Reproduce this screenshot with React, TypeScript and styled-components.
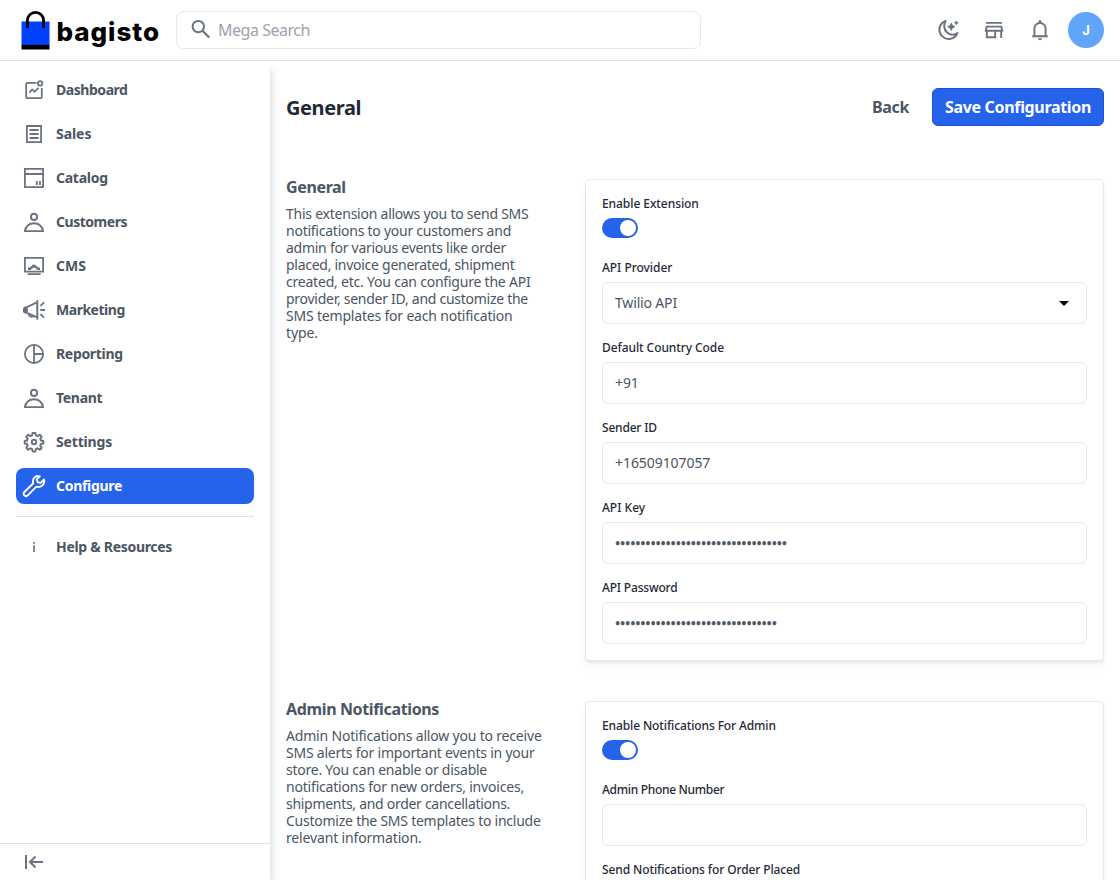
import React from 'react';
import styled, { createGlobalStyle } from 'styled-components';

const GlobalStyle = createGlobalStyle`
  * { box-sizing: border-box; }
  body {
    margin: 0;
    background: #fff;
    color: #4b5563;
    font-family: "Noto Sans", "Open Sans", sans-serif;
    font-size: 14px;
    overflow: hidden;
  }
  p, h1, h2 { margin: 0; }
`;

const Page = styled.div`
  display: flex;
  flex-direction: column;
  height: 880px;
  overflow: hidden;
`;

/* ---------- header ---------- */

const Header = styled.header`
  display: flex;
  align-items: center;
  height: 61px;
  flex: none;
  padding: 0 16px 0 21px;
  border-bottom: 1px solid #e0e3e6;
  background: #fff;
`;

const Brand = styled.div`
  display: flex;
  width: 155px;
  height: 40px;
  padding-top: 1px;
`;

const BrandName = styled.span`
  margin-left: 6.5px;
  font: 800 26px/42px Inter, sans-serif;
  letter-spacing: 0.95px;
  color: #000;
`;

const SearchBox = styled.div`
  display: flex;
  align-items: center;
  width: 525px;
  height: 38px;
  padding-left: 13px;
  gap: 6px;
  border: 1px solid #e5e7eb;
  border-radius: 8px;
`;

const Placeholder = styled.span`
  font-size: 16px;
  line-height: 24px;
  letter-spacing: -0.47px;
  color: #9ca3af;
`;

const HeaderActions = styled.div`
  display: flex;
  align-items: center;
  gap: 22px;
  margin-left: auto;
`;

const Avatar = styled.div`
  display: grid;
  place-items: center;
  width: 36px;
  height: 36px;
  margin-left: -6px;
  border-radius: 50%;
  background: #60a5fa;
  color: #fff;
  font: 700 13px/16px Inter, sans-serif;
`;

/* ---------- sidebar ---------- */

const Body = styled.div`
  display: flex;
  flex: 1;
  min-height: 0;
  overflow: hidden;
`;

const Sidebar = styled.aside`
  display: flex;
  flex-direction: column;
  width: 270px;
  flex: none;
  background: #fff;
  box-shadow: 0 8px 10px rgba(0, 0, 0, 0.18);
`;

const Nav = styled.nav`
  display: flex;
  flex-direction: column;
  gap: 8px;
  padding: 11px 16px 12px;
`;

const NavItem = styled.a<{ $active?: boolean; $track: number }>`
  display: flex;
  align-items: center;
  gap: 10px;
  height: 36px;
  padding-left: 6px;
  border-radius: 8px;
  font-weight: 700;
  letter-spacing: ${(p) => p.$track}px;
  white-space: nowrap;
  background: ${(p) => (p.$active ? '#2563eb' : 'transparent')};
  color: ${(p) => (p.$active ? '#fff' : '#4b5563')};
  svg { color: ${(p) => (p.$active ? '#fff' : '#6b7280')}; }
`;

const NavText = styled.span`
  padding-bottom: 2px;
`;

const HelpArea = styled.div`
  margin: 0 16px;
  padding-top: 12px;
  border-top: 1px solid #dfe3e6;
`;

const Collapse = styled.div`
  display: flex;
  align-items: center;
  height: 37px;
  margin-top: auto;
  padding-left: 22px;
  border-top: 1px solid #e0e3e6;
  color: #6b7280;
`;

/* ---------- content ---------- */

const Main = styled.main`
  flex: 1;
  padding: 27px 16px 0;
`;

const TitleBar = styled.div`
  display: flex;
  align-items: center;
  height: 38px;
`;

const Title = styled.h1`
  flex: 1;
  padding-top: 1px;
  font-size: 20px;
  line-height: 24px;
  font-weight: 700;
  letter-spacing: -0.4px;
  color: #1f2937;
`;

const BackButton = styled.button`
  margin-right: 23px;
  padding: 0;
  border: 0;
  background: none;
  font: 700 16px/24px "Noto Sans", sans-serif;
  letter-spacing: -0.35px;
  color: #4b5563;
`;

const SaveButton = styled.button`
  width: 172px;
  height: 38px;
  padding: 0;
  border: 1px solid #1d4ed8;
  border-radius: 6px;
  background: #2563eb;
  font: 700 16px/24px "Noto Sans", sans-serif;
  letter-spacing: -0.33px;
  color: #fff;
`;

const Sections = styled.div`
  display: flex;
  flex-direction: column;
  gap: 40px;
  margin-top: 53px;
`;

const SectionRow = styled.section`
  display: grid;
  grid-template-columns: 1fr 519px;
`;

const SectionTitle = styled.h2`
  margin-bottom: 7px;
  font-size: 16px;
  line-height: 17px;
  height: 19px;
  font-weight: 700;
  letter-spacing: -0.36px;
`;

const Line = styled.span<{ $track: number }>`
  display: block;
  line-height: 17px;
  letter-spacing: ${(p) => p.$track}px;
  white-space: nowrap;
`;

const Card = styled.div`
  padding: 16px;
  border: 1px solid #e5e7eb;
  border-radius: 4px;
  background: #fff;
  box-shadow: 0 2px 3px rgba(0, 0, 0, 0.07), 0 8px 10px rgba(0, 0, 0, 0.025);
`;

const FieldList = styled.div`
  display: flex;
  flex-direction: column;
`;

const Field = styled.div<{ $gap: number }>`
  margin-bottom: ${(p) => p.$gap}px;
  &:last-child { margin-bottom: 0; }
`;

const Label = styled.div<{ $track: number }>`
  height: 14px;
  margin-bottom: 8px;
  font-size: 12px;
  line-height: 16px;
  font-weight: 500;
  letter-spacing: ${(p) => p.$track}px;
  color: #1f2937;
`;

const Control = styled.div<{ $track?: number }>`
  display: flex;
  align-items: center;
  justify-content: space-between;
  height: 42px;
  padding: 0 17px 0 12px;
  border: 1px solid #e5e7eb;
  border-radius: 6px;
  letter-spacing: ${(p) => p.$track ?? 0}px;
`;

const ControlText = styled.span<{ $secret: boolean }>`
  padding-bottom: ${(p) => (p.$secret ? 0 : 2)}px;
  -webkit-text-stroke: ${(p) => (p.$secret ? '0.5px #4b5563' : '0')};
`;

const Switch = styled.div`
  display: flex;
  justify-content: flex-end;
  width: 36px;
  height: 20px;
  padding: 2px;
  border-radius: 10px;
  background: #2563eb;
  &::after {
    content: "";
    width: 16px;
    height: 16px;
    border-radius: 50%;
    background: #fff;
  }
`;

/* ---------- icons ---------- */

const Icon = ({ children, w = 1.8 }: { children: React.ReactNode; w?: number }) => (
  <svg width="24" height="24" viewBox="0 0 24 24" fill="none" stroke="currentColor" strokeWidth={w}>
    {children}
  </svg>
);

const BagLogo = () => (
  <svg width="29" height="40" viewBox="0 0 29 40">
    <path d="M0.5 10.500h28v23.500h-28z" fill="#0041ff" />
    <path d="M0.5 33.800h28v4.700h-28z" fill="#000" />
    <path d="M6.400 17V9.500a8.100 8.100 0 0 1 16.200 0V17" fill="none" stroke="#000" strokeWidth="2.800" />
  </svg>
);

const person = (
  <Icon w={1.9}>
    <circle cx="12" cy="6.9" r="3.1" />
    <path d="M3 21.100c.4-4.600 4-7.900 9-7.900s8.600 3.300 9 7.900z" />
  </Icon>
);

const icons: Record<string, React.ReactNode> = {
  dashboard: (
    <Icon w={1.8}>
      <path d="M14.500 4.900H5.400a1.200 1.200 0 0 0-1.200 1.200v12.800a1.200 1.200 0 0 0 1.200 1.200h13.200a1.200 1.200 0 0 0 1.200-1.200V10" />
      <path d="M7.400 14.700l2.900-3.200 2.200 2.300 4-4" />
      <circle cx="18.100" cy="5.400" r="2.200" />
    </Icon>
  ),
  sales: (
    <Icon w={1.8}>
      <path d="M4.900 4h14.200v16.200H4.900zM7.500 8h9.200M7.500 12h9.200M7.500 16h9.200" />
    </Icon>
  ),
  catalog: (
    <Icon w={1.8}>
      <path d="M2.900 2.900h18.200v18.200H2.900zM2.900 8h18.200M14.800 15v4M18 15v4" />
    </Icon>
  ),
  customers: person,
  cms: (
    <Icon w={1.8}>
      <path d="M2.900 3.900h18.200v13.800H2.900zM5.600 20.100h13" />
      <path d="M6 16v-2.600h2.300v-1.200h1.800v-1.400h3.800v1.400h1.800v1.200H18V16h-3.200v-1.300h-1.400v-1h-2.800v1H9.200V16z" fill="currentColor" stroke="none" />
    </Icon>
  ),
  marketing: (
    <Icon w={1.8}>
      <path d="M5.500 8.900L15.200 4.200v15.200L5.500 15.200M15.400 2v19.800" />
      <path d="M5.800 8.300H3.300L1 9.900v4.300l2.300 1.600h2.500z" fill="currentColor" stroke="none" />
      <path d="M6.800 15.800c.2 2.200 1.500 3.200 3.900 2.900l1.200-1M18.400 7.900l3.700-3.500M18.200 12h4.800M18.400 16.100l3.700 3.500" />
    </Icon>
  ),
  reporting: (
    <Icon w={1.8}>
      <circle cx="12" cy="12" r="9.100" />
      <path d="M12 2.800v18.400M12 12h9.200" />
    </Icon>
  ),
  tenant: person,
  settings: (
    <Icon w={2}>
      <path strokeLinejoin="round" d="M10.600 2.900h2.800l.5 2.500 1.700.7 2.200-1.400 1.900 1.900-1.400 2.200.7 1.700 2.300.5v2.400l-2.300.5-.7 1.700 1.400 2.200-1.900 1.900-2.200-1.400-1.700.7-.5 2.400h-2.800l-.5-2.400-1.700-.7-2.200 1.400-1.900-1.900 1.400-2.200-.7-1.700-2.300-.5V11l2.300-.5.7-1.700-1.400-2.200 1.900-1.900 2.200 1.400 1.700-.7z" />
      <circle cx="12" cy="12" r="2.200" />
    </Icon>
  ),
  configure: (
    <Icon w={1.9}>
      <path strokeLinejoin="round" d="M17.800 2.300c-2.900-1.100-6.400.8-6.800 4.100-.2 1.100 0 2 .3 2.900L2.400 18c-1 1-1 2.500-.1 3.400s2.400.9 3.400-.1l8.700-8.700c3.600 1.400 7.700-1.200 7.900-5.200 0-.7-.1-1.300-.3-1.900L18.600 8.900l-3-.7-.8-3z" />
    </Icon>
  ),
  help: (
    <Icon w={1.7}>
      <path d="M12 10.300V17M12 7v1.800" />
    </Icon>
  ),
};

/* ---------- data ---------- */

const menu: [string, string, number][] = [
  ['dashboard', 'Dashboard', -0.45],
  ['sales', 'Sales', -0.05],
  ['catalog', 'Catalog', -0.25],
  ['customers', 'Customers', -0.47],
  ['cms', 'CMS', 0.03],
  ['marketing', 'Marketing', -0.48],
  ['reporting', 'Reporting', -0.32],
  ['tenant', 'Tenant', -0.3],
  ['settings', 'Settings', -0.17],
  ['configure', 'Configure', -0.3],
];

type Text = [string, number];
type FieldData = { label: Text; kind?: 'switch' | 'select' | 'password'; value?: Text };

const sections: { title: string; lines: Text[]; fields: FieldData[] }[] = [
  {
    title: 'General',
    lines: [
      ['This extension allows you to send SMS', -0.239],
      ['notifications to your customers and', -0.246],
      ['admin for various events like order', -0.262],
      ['placed, invoice generated, shipment', -0.273],
      ['created, etc. You can configure the API', -0.213],
      ['provider, sender ID, and customize the', -0.269],
      ['SMS templates for each notification', -0.191],
      ['type.', -0.09],
    ],
    fields: [
      { label: ['Enable Extension', -0.07], kind: 'switch' },
      { label: ['API Provider', -0.04], kind: 'select', value: ['Twilio API', -0.162] },
      { label: ['Default Country Code', -0.085], value: ['+91', -0.1] },
      { label: ['Sender ID', -0.2], value: ['+16509107057', -0.07] },
      { label: ['API Key', 0], kind: 'password', value: ['•'.repeat(34), -0.21] },
      { label: ['API Password', -0.182], kind: 'password', value: ['•'.repeat(32), -0.21] },
    ],
  },
  {
    title: 'Admin Notifications',
    lines: [
      ['Admin Notifications allow you to receive', -0.187],
      ['SMS alerts for important events in your', -0.228],
      ['store. You can enable or disable', -0.244],
      ['notifications for new orders, invoices,', -0.191],
      ['shipments, and order cancellations.', -0.291],
      ['Customize the SMS templates to include', -0.242],
      ['relevant information.', -0.155],
    ],
    fields: [
      { label: ['Enable Notifications For Admin', -0.12], kind: 'switch' },
      { label: ['Admin Phone Number', -0.31], value: ['', 0] },
      { label: ['Send Notifications for Order Placed', -0.115], kind: 'switch' },
    ],
  },
];

const FormField = ({ label, kind, value }: FieldData) => (
  <Field $gap={kind === 'switch' ? 22 : 16}>
    <Label $track={label[1]}>{label[0]}</Label>
    {kind === 'switch' ? (
      <Switch />
    ) : (
      <Control $track={value?.[1]}>
        <ControlText $secret={kind === 'password'}>{value?.[0]}</ControlText>
        {kind === 'select' && (
          <svg width="10" height="5" viewBox="0 0 10 5">
            <path d="M0 0h10L5 5z" fill="#000" />
          </svg>
        )}
      </Control>
    )}
  </Field>
);

export default function App() {
  return (
    <Page>
      <GlobalStyle />
      <Header>
        <Brand>
          <BagLogo />
          <BrandName>bagisto</BrandName>
        </Brand>
        <SearchBox>
          <svg width="22" height="22" viewBox="0 0 22 22" fill="none" stroke="#6b7280" strokeWidth="2">
            <circle cx="8.300" cy="7.600" r="5.700" />
            <path d="M12.500 11.800l6.700 6.700" strokeWidth="2.300" />
          </svg>
          <Placeholder>Mega Search</Placeholder>
        </SearchBox>
        <HeaderActions>
          <svg width="24" height="24" viewBox="0 0 24 24" fill="none" stroke="#6b7280" strokeWidth="2">
            <path strokeLinejoin="round" d="M9.600 2.900a9.300 9.300 0 1 0 11.800 12.200c-3.400 2.300-7.600 2-10.300-.5-3.100-3-3.600-7.600-1.500-11.700z" />
            <path d="M15.300 5l1.200 2.500L19 8.700l-2.500 1.200-1.200 2.500-1.200-2.500-2.500-1.200 2.500-1.200zM20.300 2.900l.6 1.300 1.300.6-1.300.6-.6 1.300-.6-1.300-1.300-.6 1.300-.6z" fill="#6b7280" stroke="#6b7280" strokeWidth=".8" />
          </svg>
          <svg width="24" height="24" viewBox="0 0 24 24" fill="none" stroke="#6b7280" strokeWidth="1.900">
            <path d="M4 4.900h16M4.600 8.600h14.800l.8 4.200H3.800zM4.800 12.800v6.400h8.400v-6.400M19.200 12.800v7.300" />
          </svg>
          <svg width="24" height="24" viewBox="0 0 24 24" fill="none" stroke="#6b7280" strokeWidth="1.900">
            <path d="M4.300 18.200h15.400M6.400 18v-7.400a5.600 5.600 0 0 1 11.200 0V18" />
            <path d="M12 2.200v2.500" strokeWidth="2.400" />
            <path d="M10 20.200h4a2 2 0 0 1-4 0z" fill="#6b7280" stroke="none" />
          </svg>
          <Avatar>J</Avatar>
        </HeaderActions>
      </Header>
      <Body>
        <Sidebar>
          <Nav>
            {menu.map(([icon, name, track]) => (
              <NavItem key={icon} $track={track} $active={icon === 'configure'}>
                {icons[icon]}
                <NavText>{name}</NavText>
              </NavItem>
            ))}
          </Nav>
          <HelpArea>
            <NavItem $track={-0.3}>
              {icons.help}
              <NavText>Help &amp; Resources</NavText>
            </NavItem>
          </HelpArea>
          <Collapse>
            <Icon w={2}>
              <path d="M4 5v14M21 12H8M13.500 6.500L8 12l5.500 5.500" />
            </Icon>
          </Collapse>
        </Sidebar>
        <Main>
          <TitleBar>
            <Title>General</Title>
            <BackButton>Back</BackButton>
            <SaveButton>Save Configuration</SaveButton>
          </TitleBar>
          <Sections>
            {sections.map((s) => (
              <SectionRow key={s.title}>
                <div>
                  <SectionTitle>{s.title}</SectionTitle>
                  <p>
                    {s.lines.map(([text, track]) => (
                      <Line key={text} $track={track}>{text}</Line>
                    ))}
                  </p>
                </div>
                <Card>
                  <FieldList>
                    {s.fields.map((f) => (
                      <FormField key={f.label[0]} {...f} />
                    ))}
                  </FieldList>
                </Card>
              </SectionRow>
            ))}
          </Sections>
        </Main>
      </Body>
    </Page>
  );
}
